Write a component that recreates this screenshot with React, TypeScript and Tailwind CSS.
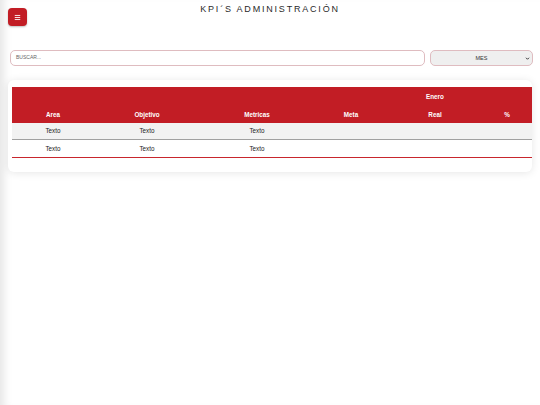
import { Menu } from "lucide-react";

const cols = ["Area", "Objetivo", "Metricas", "Meta", "Real", "%"];
const widths = ["w-[82px]", "w-[106px]", "w-[114px]", "w-[74px]", "w-[94px]", "w-[50px]"];
const rows = [
  ["Texto", "Texto", "Texto", "", "", ""],
  ["Texto", "Texto", "Texto", "", "", ""],
];

export default function App() {
  return (
    <div className="min-h-[405px] bg-white shadow-[inset_10px_0_8px_-6px_rgba(0,0,0,0.10)] font-['Liberation_Sans',Arial,sans-serif] text-[#222]">
      {/* Header */}
      <div className="relative h-[30px] px-2 pt-[8px]">
        <button className="flex h-[18px] w-[19px] items-center justify-center rounded-[4px] bg-[#c21d25] text-white shadow-[0_1px_2px_rgba(0,0,0,0.25)]">
          <Menu size={7} strokeWidth={3} />
        </button>
        <h1 className="absolute left-0 right-0 top-[3px] text-center text-[9px] tracking-[0.2em] text-[#2a2a2a]">
          KPI´S ADMINISTRACIÓN
        </h1>
      </div>

      {/* Filters */}
      <div className="mt-[20px] flex gap-[5px] pl-[10px] pr-[7px]">
        <div className="flex h-[16px] flex-1 items-center rounded-[5px] border border-[#dfbcc0] px-[5px] text-[5px] text-[#666]">
          BUSCAR...
        </div>
        <div className="relative flex h-[16px] w-[103px] items-center justify-center rounded-[5px] border border-[#dfbcc0] bg-[#efefef] text-[5.5px] text-[#333]">
          MES
          <svg className="absolute right-[2px] top-[5px]" width="5" height="5" viewBox="0 0 10 10">
            <path d="M2 3.5 L5 6.5 L8 3.5" fill="none" stroke="#222" strokeWidth="1.8" />
          </svg>
        </div>
      </div>

      {/* Card */}
      <div className="mx-[8px] mt-[14px] rounded-[6px] bg-white px-[4px] pb-[14px] pt-[7px] shadow-[0_1px_8px_rgba(0,0,0,0.10)]">
        <table className="w-full table-fixed border-separate border-spacing-0 text-center text-[6.3px]">
          <thead className="bg-[#c21d25] font-bold text-white">
            <tr className="h-[19px]">
              <th className={widths[0]}></th>
              <th className={widths[1]}></th>
              <th className={widths[2]}></th>
              <th className={widths[3]}></th>
              <th className={widths[4]}>Enero</th>
              <th className={widths[5]}></th>
            </tr>
            <tr className="h-[17px]">
              {cols.map((c, i) => (
                <th key={c} className={widths[i]}>
                  {c}
                </th>
              ))}
            </tr>
          </thead>
          <tbody>
            {rows.map((r, i) => (
              <tr key={i} className={i === 0 ? "h-[17px] bg-[#f2f2f2]" : "h-[18px] bg-white"}>
                {r.map((cell, j) => (
                  <td
                    key={j}
                    className={
                      i === 0
                        ? "border-b border-solid border-b-[#a0a0a0]"
                        : "border-b border-solid border-b-[#c8262d]"
                    }
                  >
                    {cell}
                  </td>
                ))}
              </tr>
            ))}
          </tbody>
        </table>
      </div>
    </div>
  );
}
